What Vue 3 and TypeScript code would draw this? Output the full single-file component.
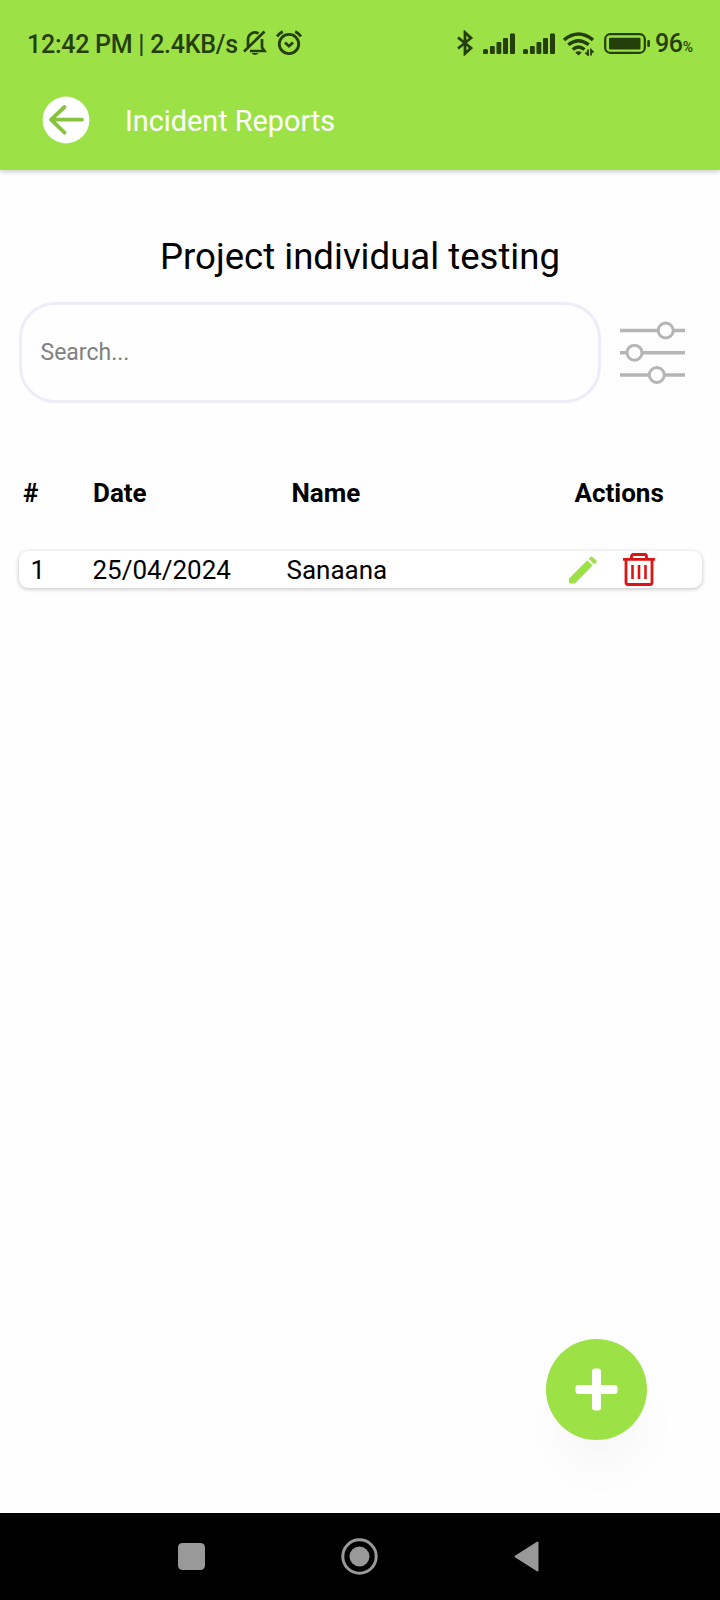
<script setup lang="ts">
import { ref } from 'vue'

interface Report {
  id: number
  date: string
  name: string
}

const search = ref('')
const reports = ref<Report[]>([{ id: 1, date: '25/04/2024', name: 'Sanaana' }])
const signals = [0, 1]
</script>

<template>
  <div class="screen">
    <header class="top">
      <div class="status">
        <span class="status-text">12:42 PM | 2.4KB/s</span>
        <svg class="i-bell" width="24" height="26" viewBox="0 0 24 26" fill="none" stroke="#253f0b" stroke-width="2.7">
          <path d="M5 17.5V10a7 7 0 0 1 10.5-6.5M19 9v8.5l2.5 3.5H7M1 21.5 21.5 1.5" />
          <path d="M8.5 23h7q-1.5 2-3.5 2t-3.5-2z" fill="#253f0b" stroke="none" />
        </svg>
        <svg class="i-alarm" width="26" height="26" viewBox="0 0 26 26" fill="none" stroke="#253f0b" stroke-width="2.8">
          <circle cx="13" cy="14" r="9.7" />
          <path d="M1 6.500Q3.200 3 6.800 1.600M25 6.500Q22.800 3 19.200 1.600M9 12.500l4 3.700 4-3.700" />
        </svg>
        <span class="grow"></span>
        <svg class="i-bt" width="18" height="26" viewBox="0 0 18 26" fill="none" stroke="#253f0b" stroke-width="2.8">
          <path d="M2 7.500 15 18 9 23.500V2.500L15 8 2 18.500" />
        </svg>
        <svg v-for="s in signals" :key="s" class="i-signal" width="32" height="22" viewBox="0 0 32 22" fill="#253f0b">
          <rect x="0" y="16" width="5" height="5" rx="1.5" />
          <rect x="7" y="13" width="4.800" height="8" rx="1" />
          <rect x="13.500" y="9" width="4.800" height="12" rx="1" />
          <rect x="20" y="5" width="5" height="16" rx="1" />
          <rect x="27" y="0.500" width="5" height="20.500" rx="1" />
        </svg>
        <svg class="i-wifi" width="31" height="24" viewBox="0 0 31 24" fill="none" stroke="#253f0b" stroke-width="3.4">
          <path d="M1 8Q15.500-4 30 8M5.300 12.800Q15.500 4.500 25.700 12.800M9.700 17.500Q15.500 12.500 21.500 17.500" />
          <path d="M12.300 20.500q3.200-2.500 6.400 0L15.500 23.500z" fill="#253f0b" stroke="none" />
          <path d="M25 17.500v5.500l-2.500-2.500M28 23.500v-5.500l2.500 2.500" stroke-width="1.8" />
        </svg>
        <svg class="i-battery" width="46" height="22" viewBox="0 0 46 22">
          <rect x="1.200" y="1.200" width="39.600" height="18.600" rx="5" fill="none" stroke="#253f0b" stroke-width="2.2" />
          <rect x="5" y="4.700" width="31.500" height="11.800" rx="1" fill="#253f0b" />
          <rect x="43.300" y="7" width="2.600" height="7" rx="1" fill="#253f0b" />
        </svg>
        <span class="level">96<small>%</small></span>
      </div>
      <div class="bar">
        <button class="back" aria-label="Back">
          <svg width="48" height="48" viewBox="0 0 48 48">
            <circle cx="24" cy="24" r="23.400" fill="#fff" />
            <path d="M22.500 11 9 23.700l13.500 13M9 23.700h31" fill="none" stroke="#87c341" stroke-width="3.8" stroke-linecap="round" stroke-linejoin="round" />
          </svg>
        </button>
        <span class="bar-title">Incident Reports</span>
      </div>
    </header>

    <main class="content">
      <h1>Project individual testing</h1>
      <div class="tools">
        <input v-model="search" class="search" placeholder="Search..." />
        <svg class="filter" width="65" height="64" viewBox="0 0 65 64" stroke="#b5b5b5" fill="#fff">
          <path d="M0 10.500h65M0 32.700h65M0 55h65" stroke-width="3.6" />
          <g stroke-width="3">
            <circle cx="45.700" cy="10.500" r="7.500" />
            <circle cx="14.500" cy="32.700" r="7.500" />
            <circle cx="36.800" cy="55" r="7.500" />
          </g>
        </svg>
      </div>

      <div class="head">
        <span>#</span><span>Date</span><span>Name</span><span>Actions</span>
      </div>
      <div v-for="r in reports" :key="r.id" class="row">
        <span>{{ r.id }}</span><span>{{ r.date }}</span><span>{{ r.name }}</span>
        <svg class="pencil" width="28" height="28" viewBox="0 0 28 28" fill="#9ce246">
          <path d="M0 22.500 18.300 4.200l5.200 5.200L6 27.500H1.500Q0 27.500 0 26zM19.700 2.800 21.500.9Q22.400 0 23.500.9L27.400 4.500Q28.300 5.500 27.400 6.500L25 8.300z" />
        </svg>
        <svg class="trash" width="32" height="34" viewBox="0 0 32 34" fill="none" stroke="#dc1414">
          <path d="M0 6.300h32M3 7v22.500q0 2 2 2h22q2 0 2-2V7M8.500 6V3.500q0-2 2-2h11q2 0 2 2V6" stroke-width="2.8" />
          <path d="M9.500 12v14M16 12v14M22.500 12v14" stroke-width="2.6" />
        </svg>
      </div>
      <button class="fab" aria-label="Add">
        <svg width="43" height="43" viewBox="0 0 43 43" fill="#fff">
          <rect x="17" y="0.500" width="9" height="42" rx="3" />
          <rect x="0.500" y="17" width="42" height="9" rx="3" />
        </svg>
      </button>
    </main>

    <nav class="nav">
      <svg width="27" height="27" viewBox="0 0 27 27"><rect width="27" height="27" rx="4.500" fill="#999" /></svg>
      <svg width="37" height="37" viewBox="0 0 37 37">
        <circle cx="18.500" cy="18.500" r="16.700" fill="none" stroke="#999" stroke-width="3" />
        <circle cx="18.500" cy="18.500" r="10" fill="#999" />
      </svg>
      <svg width="25" height="31" viewBox="0 0 25 31">
        <path d="M1.500 15.500 23.500 1.500v28z" fill="#999" stroke="#999" stroke-width="2" stroke-linejoin="round" />
      </svg>
    </nav>
  </div>
</template>

<style>
body {
  margin: 0;
}
</style>

<style scoped>
.screen {
  width: 720px;
  height: 1600px;
  display: flex;
  flex-direction: column;
  overflow: hidden;
  background: #fefefe;
  color: #000;
  font-family: Roboto, sans-serif;
}
svg {
  display: block;
  flex: none;
}
button {
  padding: 0;
  border: 0;
  background: none;
}
.top {
  height: 170px;
  flex: none;
  background: #9ce246;
  box-shadow: 0 2px 5px rgba(0, 0, 0, 0.2);
}
.status {
  height: 86px;
  box-sizing: border-box;
  padding: 0 27px;
  display: flex;
  align-items: center;
  color: #253f0b;
  font-weight: 500;
  white-space: nowrap;
}
.status-text {
  width: 216px;
  font-size: 25px;
  letter-spacing: -0.27px;
  line-height: 30px;
  margin-top: 3px;
}
.i-alarm {
  margin-left: 9px;
}
.grow {
  flex: 1;
}
.i-bt {
  margin-right: 9px;
}
.i-signal {
  margin: 2px 8px 0 0;
}
.i-wifi {
  margin: 2px 10px 0 0;
}
.i-battery {
  margin: 1px 5px 0 0;
}
.level {
  width: 38px;
  font-size: 25px;
  line-height: 30px;
  letter-spacing: -0.4px;
  margin-top: 5px;
}
.level small {
  font-size: 14px;
}
.bar {
  height: 67px;
  padding-left: 41.5px;
  display: flex;
  align-items: center;
}
.bar-title {
  margin: 3px 0 0 35.5px;
  color: #fff;
  font-size: 28.8px;
}
.content {
  flex: 1;
  position: relative;
  display: flex;
  flex-direction: column;
  padding: 65px 18px 0;
}
h1 {
  margin: 0;
  text-align: center;
  font-size: 36.6px;
  line-height: 44px;
  font-weight: 400;
}
.tools {
  margin-top: 23px;
  display: flex;
  align-items: center;
}
.search {
  margin-left: 1px;
  width: 582px;
  height: 101px;
  box-sizing: border-box;
  border: 3px solid #efecf9;
  border-radius: 36px;
  padding: 0 18.5px;
  background: #fefefe;
  font: 23px Roboto, sans-serif;
  outline: 0;
}
.search::placeholder {
  color: #808080;
  opacity: 1;
}
.filter {
  margin: -2px 0 0 19px;
}
.head,
.row {
  display: grid;
  align-items: center;
}
.head {
  margin-top: 75px;
  height: 30px;
  padding-left: 5px;
  grid-template-columns: 70px 198.5px 283px 1fr;
  font-size: 26px;
  font-weight: 700;
}
.row {
  margin-top: 43px;
  height: 37px;
  margin-left: 1px;
  padding-left: 11.5px;
  grid-template-columns: 62px 194px 282px 54px 1fr;
  font-size: 26px;
  border-radius: 9px;
  background: #fff;
  box-shadow: 0 1px 4px rgba(0, 0, 0, 0.25);
}
.fab {
  position: absolute;
  left: 546px;
  top: 1169px;
  width: 101px;
  height: 101px;
  border-radius: 50%;
  background: #9ce246;
  display: flex;
  align-items: center;
  justify-content: center;
  box-shadow: 4px 38px 40px rgba(0, 0, 0, 0.025);
}
.nav {
  height: 87px;
  flex: none;
  box-sizing: border-box;
  padding: 0 181px 0 178px;
  display: flex;
  align-items: center;
  justify-content: space-between;
  background: #000;
}
</style>
